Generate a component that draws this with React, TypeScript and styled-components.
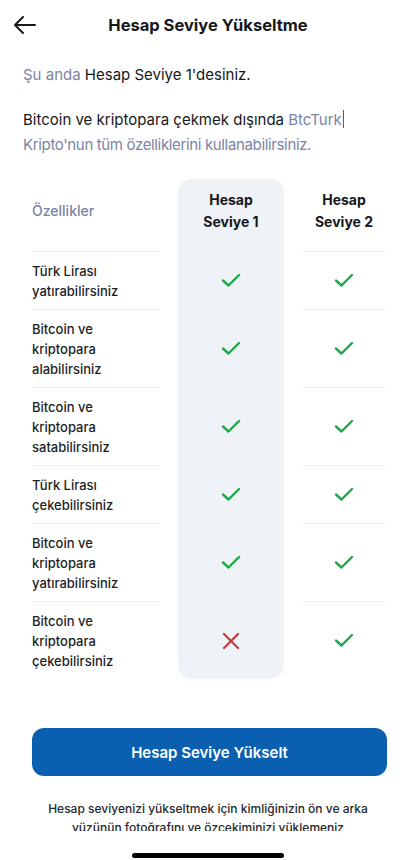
import React from 'react'
import styled, { createGlobalStyle } from 'styled-components'

const GlobalStyle = createGlobalStyle`
  body {
    margin: 0;
    background: #ffffff;
    font-family: Inter, "Noto Sans", "Liberation Sans", sans-serif;
    -webkit-font-smoothing: antialiased;
  }
`

const Page = styled.div`
  width: 416px;
  height: 860px;
  display: flex;
  flex-direction: column;
  overflow: hidden;
  background: #ffffff;
  color: #16171c;
`

const Header = styled.div`
  height: 50px;
  display: grid;
  grid-template-columns: 48px 1fr 48px;
  align-items: center;
`

const BackButton = styled.button`
  border: 0;
  background: none;
  padding: 0 0 0 13px;
  height: 24px;
  display: flex;
  align-items: center;
  color: #16171c;
`

const Title = styled.h1`
  margin: 0;
  text-align: center;
  font-size: 16.5px;
  font-weight: 700;
`

const Intro = styled.p<{ $gap: number }>`
  margin: ${({ $gap }) => $gap}px 23px 0;
  font-size: 15px;
  line-height: 25px;
  font-weight: 400;
  color: #16171c;
`

const Muted = styled.span<{ $tight?: boolean }>`
  color: #7b84a3;
  letter-spacing: ${({ $tight }) => ($tight ? '-0.35px' : '0')};
`

const Caret = styled.span`
  display: inline-block;
  width: 1px;
  height: 18px;
  margin-left: 1px;
  vertical-align: -3px;
  background: #555b6e;
`

const Table = styled.div`
  margin: 22px 19px 0 32px;
  display: grid;
  grid-template-columns: 146px 106px 113px;
`

const Highlight = styled.div`
  grid-column: 2;
  grid-row: 1 / 8;
  background: #eff3f7;
  border-radius: 14px;
`

const HeadCell = styled.div<{ $col: number; $muted?: boolean }>`
  grid-column: ${({ $col }) => $col};
  grid-row: 1;
  padding: 10px ${({ $col }) => ($col === 1 ? 18 : 0)}px 18px ${({ $col }) => ($col === 3 ? 7 : 0)}px;
  min-height: 44px;
  display: flex;
  align-items: center;
  justify-content: ${({ $col }) => ($col === 1 ? 'flex-start' : 'center')};
  text-align: ${({ $col }) => ($col === 1 ? 'left' : 'center')};
  font-size: 14px;
  line-height: 22px;
  font-weight: ${({ $muted }) => ($muted ? 500 : 700)};
  color: ${({ $muted }) => ($muted ? '#7b84a3' : '#16171c')};
  position: relative;
  z-index: 1;
`

const Cell = styled.div<{ $col: number; $row: number }>`
  grid-column: ${({ $col }) => $col};
  grid-row: ${({ $row }) => $row};
  padding: 0 ${({ $col }) => ($col === 1 ? 18 : 0)}px 0 ${({ $col }) => ($col === 3 ? 7 : 0)}px;
  position: relative;
  z-index: 1;
  display: flex;
`

const CellInner = styled.div<{ $label?: boolean }>`
  flex: 1;
  border-top: 1px solid #eef1f5;
  margin: 0 ${({ $label }) => ($label ? 0 : 11)}px;
  padding: 8.5px 0;
  display: flex;
  align-items: center;
  justify-content: ${({ $label }) => ($label ? 'flex-start' : 'center')};
  font-size: 13px;
  line-height: 20px;
  font-weight: 500;
  color: #1d1f26;
`

const Label = styled.span`
  display: block;
  width: 100px;
`

const Button = styled.button`
  margin: 49px 29px 0 32px;
  height: 48px;
  border: 0;
  border-radius: 12px;
  background: #0b5fb1;
  color: #ffffff;
  font-family: inherit;
  font-size: 15px;
  font-weight: 600;
`

const FooterClip = styled.div`
  margin: 23px 32px 0;
  height: 32px;
  overflow: hidden;
`

const FooterText = styled.p`
  margin: 0;
  text-align: center;
  font-size: 12px;
  line-height: 19px;
  font-weight: 500;
  color: #26282e;
`

const HomeBar = styled.div`
  margin: 22px auto 0;
  width: 152px;
  height: 5px;
  border-radius: 3px;
  background: #000000;
`

const Check = () => (
  <svg width="20" height="15" viewBox="0 0 20 15" fill="none">
    <polyline points="2,7.5 7.5,12.5 18,2" stroke="#1fa74b" strokeWidth="2.4" strokeLinecap="round" strokeLinejoin="round" />
  </svg>
)

const Cross = () => (
  <svg width="18" height="18" viewBox="0 0 18 18" fill="none">
    <path d="M2 2L16 16M16 2L2 16" stroke="#c63c3c" strokeWidth="2.2" strokeLinecap="round" />
  </svg>
)

const rows: { label: string; lvl1: boolean; lvl2: boolean }[] = [
  { label: 'Türk Lirası yatırabilirsiniz', lvl1: true, lvl2: true },
  { label: 'Bitcoin ve kriptopara alabilirsiniz', lvl1: true, lvl2: true },
  { label: 'Bitcoin ve kriptopara satabilirsiniz', lvl1: true, lvl2: true },
  { label: 'Türk Lirası çekebilirsiniz', lvl1: true, lvl2: true },
  { label: 'Bitcoin ve kriptopara yatırabilirsiniz', lvl1: true, lvl2: true },
  { label: 'Bitcoin ve kriptopara çekebilirsiniz', lvl1: false, lvl2: true },
]

export default function App() {
  return (
    <Page>
      <GlobalStyle />
      <Header>
        <BackButton aria-label="Geri">
          <svg width="23" height="20" viewBox="0 0 23 20" fill="none">
            <path d="M22 10H2M10 2L2 10L10 18" stroke="#16171c" strokeWidth="2" strokeLinecap="round" strokeLinejoin="round" />
          </svg>
        </BackButton>
        <Title>Hesap Seviye Yükseltme</Title>
        <div />
      </Header>

      <Intro $gap={12}>
        <Muted>Şu anda</Muted> Hesap Seviye 1'desiniz.
      </Intro>
      <Intro $gap={20}>
        Bitcoin ve kriptopara çekmek dışında <Muted>BtcTurk</Muted>
        <Caret /> <Muted $tight>Kripto'nun tüm özelliklerini kullanabilirsiniz.</Muted>
      </Intro>

      <Table>
        <Highlight />
        <HeadCell $col={1} $muted>
          Özellikler
        </HeadCell>
        <HeadCell $col={2}>
          Hesap
          <br />
          Seviye 1
        </HeadCell>
        <HeadCell $col={3}>
          Hesap
          <br />
          Seviye 2
        </HeadCell>
        {rows.map((r, i) => (
          <React.Fragment key={r.label}>
            <Cell $col={1} $row={i + 2}>
              <CellInner $label>
                <Label>{r.label}</Label>
              </CellInner>
            </Cell>
            <Cell $col={2} $row={i + 2}>
              <CellInner>{r.lvl1 ? <Check /> : <Cross />}</CellInner>
            </Cell>
            <Cell $col={3} $row={i + 2}>
              <CellInner>{r.lvl2 ? <Check /> : <Cross />}</CellInner>
            </Cell>
          </React.Fragment>
        ))}
      </Table>

      <Button>Hesap Seviye Yükselt</Button>

      <FooterClip>
        <FooterText>
          Hesap seviyenizi yükseltmek için kimliğinizin ön ve arka yüzünün fotoğrafını ve özçekiminizi yüklemeniz
          gerekmektedir.
        </FooterText>
      </FooterClip>
      <HomeBar />
    </Page>
  )
}
